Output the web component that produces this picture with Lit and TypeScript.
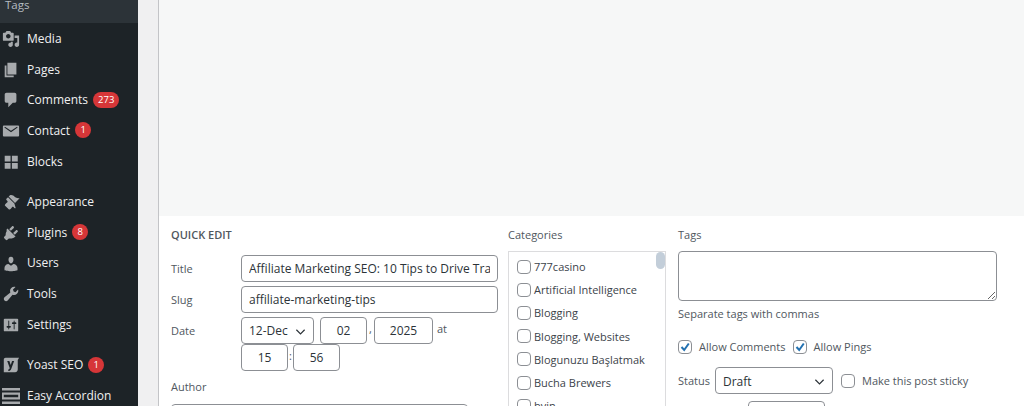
import { LitElement, html, css, svg } from 'lit';
import { customElement } from 'lit/decorators.js';

const icons: Record<string, string> = {
  media: 'M13 11V4c0-.55-.45-1-1-1h-1.670L9 1H5L3.670 3H2c-.55 0-1 .45-1 1v7c0 .55.45 1 1 1h10c.55 0 1-.45 1-1zM7 4.500c1.380 0 2.500 1.120 2.500 2.500S8.380 9.500 7 9.500 4.500 8.380 4.500 7 5.620 4.500 7 4.500zM14 6h5v10.500c0 1.380-1.120 2.500-2.500 2.500S14 17.880 14 16.500s1.120-2.500 2.500-2.500c.17 0 .34.02.5.05V9h-3V6zm-4 8.050V13h2v3.500c0 1.380-1.120 2.500-2.500 2.500S7 17.880 7 16.500 8.120 14 9.500 14c.17 0 .34.02.5.05z',
  page: 'M6 15V2h10v13H6zm-1 1h8v2H3V5h2v11z',
  comments: 'M5 2h9c1.100 0 2 .9 2 2v7c0 1.100-.9 2-2 2h-2l-5 5v-5H5c-1.100 0-2-.9-2-2V4c0-1.100.9-2 2-2z',
  mail: 'M2 4h16c.6 0 1 .4 1 1v10c0 .6-.4 1-1 1H2c-.6 0-1-.4-1-1V5c0-.6.4-1 1-1zm.6 2.200L10 11.400l7.400-5.200-.7-.9L10 9.800 3.300 5.300z',
  blocks: 'M3 3h6.500v6.500H3zM11 3h6.500v6.500H11zM3 11h6.500v6.500H3zM11 11h6.500v6.500H11z',
  appearance: 'M14.480 11.060L7.410 3.990l1.500-1.500c.5-.56 2.300-.47 3.510.32 1.210.8 1.430 1.280 2.910 2.100 1.180.64 2.450 1.260 4.230.85zm-.71.710L6.700 4.700 4.930 6.470c-.39.39-.39 1.020 0 1.410l1.060 1.060c.39.39.39 1.030 0 1.420-.6.6-1.420 1.030-2.120 1.770-.7.7-.71 1.700-.71 1.700l4.600 4.600s1.060-.16 1.770-.71c.74-.7 1.170-1.520 1.770-2.120.39-.39 1.030-.39 1.420 0l1.060 1.060c.39.39 1.020.39 1.410 0z',
  plugins: 'M13.110 4.360L9.870 7.600 8 5.730l3.240-3.240c.35-.34 1.050-.2 1.560.32.52.51.66 1.210.31 1.550zm-8 1.770l.91-1.120 9.010 9.010-1.190.84c-.71.71-2.120 1.160-3.120 1.160H7.600l-1.600 1.600c-.5.5-1.300.5-1.800 0l-1.700-1.700c-.5-.5-.5-1.300 0-1.800l1.600-1.600v-1.200c0-1 .45-2.400 1.010-3.090zm7.260 3.970l3.240-3.240c.34-.35 1.040-.21 1.550.31.52.51.66 1.210.31 1.550l-3.240 3.250z',
  users: 'M10 9.250c-2.270 0-2.730-3.440-2.730-3.440C7 4.020 7.820 2 9.970 2c2.160 0 2.980 2.020 2.710 3.810 0 0-.41 3.440-2.680 3.440zm0 2.570L12.720 10c2.390 0 4.520 2.330 4.520 4.530v2.490s-3.650 1.130-7.240 1.130c-3.650 0-7.240-1.130-7.240-1.130v-2.490c0-2.250 1.940-4.480 4.470-4.480z',
  tools: 'M16.680 9.770c-1.340 1.340-3.300 1.670-4.950.99l-5.410 6.520c-.99.99-2.590.99-3.540 0-.99-.95-.99-2.550 0-3.540l6.520-5.410c-.68-1.650-.35-3.610.99-4.950 1.280-1.280 3.120-1.640 4.730-1.100l-2.810 2.810.71 2.120 2.120.71 2.810-2.810c.54 1.610.18 3.450-1.170 4.660z',
  settings: 'M18 16V4c0-.55-.45-1-1-1H3c-.55 0-1 .45-1 1v12c0 .55.45 1 1 1h14c.55 0 1-.45 1-1zM8 11h1c.55 0 1 .45 1 1s-.45 1-1 1H8v1.500c0 .28-.22.5-.5.5s-.5-.22-.5-.5V13H6c-.55 0-1-.45-1-1s.45-1 1-1h1V5.500c0-.28.22-.5.5-.5s.5.22.5.5V11zm5-2h-1c-.55 0-1-.45-1-1s.45-1 1-1h1V5.500c0-.28.22-.5.5-.5s.5.22.5.5V7h1c.55 0 1 .45 1 1s-.45 1-1 1h-1v5.500c0 .28-.22.5-.5.5s-.5-.22-.5-.5V9z',
  yoast: 'M4 2h15l-1.500 2.500V15c0 1.700-1.300 3-3 3H2V4c0-1.100.9-2 2-2zm4.200 3.600H5.800l2.600 7.300c.2.6.2.9-.1 1.400-.3.5-.7.7-1.300.8v1.600c1.500 0 2.500-.7 3.200-2.300l3.300-8.800h-2.300l-1.500 4.500z',
  accordion: 'M0 1h20v3H0zM0 6h20v8H0zM2 8.500v3h16v-3zM0 16h20v3H0z',
};

const menu = [
  [
    { icon: 'media', label: 'Media' },
    { icon: 'page', label: 'Pages' },
    { icon: 'comments', label: 'Comments', badge: '273' },
    { icon: 'mail', label: 'Contact', badge: '1' },
    { icon: 'blocks', label: 'Blocks' },
  ],
  [
    { icon: 'appearance', label: 'Appearance' },
    { icon: 'plugins', label: 'Plugins', badge: '8' },
    { icon: 'users', label: 'Users' },
    { icon: 'tools', label: 'Tools' },
    { icon: 'settings', label: 'Settings' },
  ],
  [
    { icon: 'yoast', label: 'Yoast SEO', badge: '1' },
    { icon: 'accordion', label: 'Easy Accordion' },
  ],
];

const categories = [
  '777casino',
  'Artificial Intelligence',
  'Blogging',
  'Blogging, Websites',
  'Blogunuzu Başlatmak',
  'Bucha Brewers',
  'bvin',
];

const chevron = html`<svg class="chev" viewBox="0 0 12 8"><path d="M1.500 1.500 6 6l4.500-4.500" fill="none" stroke="#2c3338" stroke-width="1.300"/></svg>`;

@customElement('app-root')
export class AppRoot extends LitElement {
  static styles = css`
    :host {
      display: flex;
      width: 1024px;
      height: 406px;
      overflow: hidden;
      background: #f0f0f1;
      font-family: 'Open Sans', 'Liberation Sans', sans-serif;
      font-size: 11px;
      color: #50575e;
    }

    .sidebar {
      width: 138px;
      flex: none;
      background: #1d2327;
      color: #f0f0f1;
      font-size: 12px;
    }

    .sub {
      height: 23px;
      background: #2c3338;
      color: #b5bcc2;
      padding-left: 5px;
      font-size: 11.500px;
      line-height: 9px;
    }

    .group {
      padding-bottom: 9.800px;
    }

    .item {
      display: flex;
      align-items: center;
      height: 30.700px;
      padding-left: 27px;
      gap: 5px;
      position: relative;
    }

    .item svg {
      position: absolute;
      left: 2px;
      top: 7px;
      width: 18px;
      height: 18px;
      fill: #a7aaad;
    }

    .badge {
      min-width: 6px;
      height: 16px;
      line-height: 16px;
      padding: 0 5px;
      border-radius: 8px;
      background: #d63638;
      color: #fff;
      font-size: 9.500px;
      text-align: center;
    }

    .main {
      flex: 1;
      padding-left: 20px;
      display: flex;
      flex-direction: column;
    }

    .preview {
      height: 216px;
      flex: none;
      background: #f6f7f7;
      border-left: 1px solid #c3c4c7;
    }

    .panel {
      flex: 1;
      background: #fff;
      border-left: 1px solid #c3c4c7;
      display: flex;
      padding: 11px 0 0 12px;
      overflow: hidden;
    }

    .col-left {
      width: 327px;
      flex: none;
    }

    .heading {
      font-size: 11px;
      font-weight: 600;
      line-height: 16px;
      margin-bottom: 12px;
    }

    .row {
      display: flex;
      align-items: flex-start;
      margin-bottom: 4px;
    }

    .row > label {
      width: 70px;
      flex: none;
      line-height: 27px;
    }

    input[type='text'],
    textarea,
    .select {
      box-sizing: border-box;
      border: 1px solid #8c8f94;
      border-radius: 4px;
      background: #fff;
      color: #2c3338;
      font-family: inherit;
      font-size: 12px;
      margin: 0;
    }

    input[type='text'] {
      height: 26.700px;
      padding: 0 7px;
      outline: none;
    }

    .wide {
      width: 257px;
    }

    .centered {
      text-align: center;
    }

    .date-row {
      display: flex;
      align-items: flex-start;
    }

    .sep {
      line-height: 24px;
      text-align: center;
    }

    .select {
      position: relative;
      display: flex;
      align-items: center;
      height: 27px;
      padding-left: 7px;
    }

    .chev {
      position: absolute;
      right: 7px;
      top: 10px;
      width: 11px;
      height: 8px;
    }

    .author-label {
      line-height: 16px;
      margin: 8px 0 9px;
    }

    .col-cat {
      width: 158px;
      margin-left: 10px;
      flex: none;
    }

    .col-label {
      line-height: 16px;
      margin-bottom: 8px;
    }

    .cats {
      position: relative;
      height: 170px;
      border: 1px solid #dcdcde;
      box-sizing: border-box;
      padding: 3px 0 0 8px;
      overflow: hidden;
    }

    .thumb {
      position: absolute;
      right: 0;
      top: 0;
      width: 9px;
      height: 17px;
      border-radius: 5px;
      background: #c3ced9;
    }

    .cat {
      display: flex;
      align-items: center;
      height: 23.200px;
      gap: 2px;
      color: #3c434a;
      white-space: nowrap;
    }

    .box {
      appearance: none;
      box-sizing: border-box;
      width: 14px;
      height: 14px;
      margin: 0 1px 0 0;
      flex: none;
      border: 1px solid #8c8f94;
      border-radius: 4px;
      background: #fff;
    }

    .checked {
      position: relative;
      display: inline-block;
      width: 14px;
      height: 14px;
      flex: none;
    }

    .checked .box {
      display: block;
    }

    .checked svg {
      position: absolute;
      left: 1px;
      top: 1px;
      width: 12px;
      height: 12px;
    }

    .col-tags {
      width: 319px;
      margin-left: 12px;
      flex: none;
    }

    textarea {
      display: block;
      width: 319px;
      height: 50px;
      padding: 4px 7px;
    }

    .help {
      line-height: 16px;
      margin-top: 5px;
    }

    .checks {
      display: flex;
      align-items: center;
      margin-top: 17px;
    }

    .checks .text {
      margin: 0 7px;
    }

    .status {
      display: flex;
      align-items: center;
      margin-top: 13px;
    }

    .status .select {
      width: 118px;
      margin: 0 8px 0 5px;
      padding-top: 2px;
    }

    .status .text {
      margin-left: 6px;
    }

    .extra {
      box-sizing: border-box;
      width: 77px;
      height: 27px;
      margin: 7px 0 0 70px;
      border: 1px solid #8c8f94;
      border-radius: 4px;
    }
  `;

  private renderCheck() {
    return html`<span class="checked">
      <input class="box" type="checkbox" />
      <svg viewBox="0 0 12 12"><path d="M2.500 6 5.200 9 9.800 2.500" fill="none" stroke="#2271b1" stroke-width="2"/></svg>
    </span>`;
  }

  render() {
    return html`
      <nav class="sidebar">
        <div class="sub">Tags</div>
        ${menu.map(
          (group) => html`<div class="group">
            ${group.map(
              (it: any) => html`<div class="item">
                <svg viewBox="0 0 20 20">${svg`<path fill-rule="evenodd" d=${icons[it.icon]}></path>`}</svg>
                <span>${it.label}</span>
                ${it.badge ? html`<span class="badge">${it.badge}</span>` : ''}
              </div>`,
            )}
          </div>`,
        )}
      </nav>
      <div class="main">
        <div class="preview"></div>
        <div class="panel">
          <div class="col-left">
            <div class="heading">QUICK EDIT</div>
            <div class="row">
              <label>Title</label>
              <input class="wide" type="text" .value=${'Affiliate Marketing SEO: 10 Tips to Drive Traffic'} />
            </div>
            <div class="row">
              <label>Slug</label>
              <input class="wide" type="text" .value=${'affiliate-marketing-tips'} />
            </div>
            <div class="row">
              <label>Date</label>
              <div>
                <div class="date-row">
                  <div class="select" style="width:73px">12-Dec${chevron}</div>
                  <span class="sep" style="width:6px"></span>
                  <input class="centered" style="width:47px" type="text" .value=${'02'} />
                  <span class="sep" style="width:7px">,</span>
                  <input class="centered" style="width:59px" type="text" .value=${'2025'} />
                  <span class="sep" style="margin-left:4px">at</span>
                </div>
                <div class="date-row">
                  <input class="centered" style="width:47px" type="text" .value=${'15'} />
                  <span class="sep" style="width:5px">:</span>
                  <input class="centered" style="width:47px" type="text" .value=${'56'} />
                </div>
              </div>
            </div>
            <div class="author-label">Author</div>
            <input type="text" style="width:297px" />
          </div>
          <div class="col-cat">
            <div class="col-label">Categories</div>
            <div class="cats">
              <div class="thumb"></div>
              ${categories.map(
                (c) => html`<div class="cat"><input class="box" type="checkbox" /><span>${c}</span></div>`,
              )}
            </div>
          </div>
          <div class="col-tags">
            <div class="col-label">Tags</div>
            <textarea></textarea>
            <div class="help">Separate tags with commas</div>
            <div class="checks">
              ${this.renderCheck()}<span class="text">Allow Comments</span>
              ${this.renderCheck()}<span class="text">Allow Pings</span>
            </div>
            <div class="status">
              <span>Status</span>
              <div class="select">Draft${chevron}</div>
              <input class="box" type="checkbox" />
              <span class="text">Make this post sticky</span>
            </div>
            <div class="extra"></div>
          </div>
        </div>
      </div>
    `;
  }
}
